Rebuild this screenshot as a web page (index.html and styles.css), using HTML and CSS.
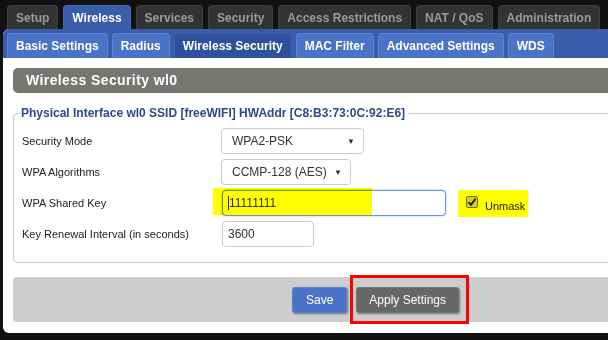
FILE: index.html
```html
<!DOCTYPE html>
<html>
<head>
<meta charset="utf-8">
<title>Wireless Security</title>
<link rel="stylesheet" href="styles.css">
</head>
<body>
<div class="page">
  <nav class="maintabs">
    <a class="tab">Setup</a>
    <a class="tab active">Wireless</a>
    <a class="tab">Services</a>
    <a class="tab">Security</a>
    <a class="tab">Access Restrictions</a>
    <a class="tab">NAT / QoS</a>
    <a class="tab">Administration</a>
  </nav>
  <div class="panel">
    <nav class="subtabs">
      <a class="subtab">Basic Settings</a>
      <a class="subtab">Radius</a>
      <a class="subtab active">Wireless Security</a>
      <a class="subtab">MAC Filter</a>
      <a class="subtab">Advanced Settings</a>
      <a class="subtab">WDS</a>
    </nav>
    <div class="content">
      <h2 class="section-title">Wireless Security wl0</h2>
      <fieldset class="iface">
        <legend>Physical Interface wl0 SSID [freeWIFI] HWAddr [C8:B3:73:0C:92:E6]</legend>
        <div class="rows">
          <div class="row">
            <label class="lbl">Security Mode</label>
            <div class="select w-mode"><span>WPA2-PSK</span><span class="arrow">&#9660;</span></div>
          </div>
          <div class="row">
            <label class="lbl">WPA Algorithms</label>
            <div class="select w-alg"><span>CCMP-128 (AES)</span><span class="arrow">&#9660;</span></div>
          </div>
          <div class="row">
            <label class="lbl">WPA Shared Key</label>
            <div class="key-wrap">
              <div class="input key focused"><span class="caret"></span>11111111</div>
              <span class="marker marker-key"></span>
            </div>
            <div class="unmask">
              <span class="checkbox"><svg width="10" height="10" viewBox="0 0 10 10"><path d="M1.5 5.2 L4 7.8 L8.6 1.6" fill="none" stroke="#222" stroke-width="2"/></svg></span>
              <span class="unmask-text">Unmask</span>
            </div>
          </div>
          <div class="row">
            <label class="lbl">Key Renewal Interval (in seconds)</label>
            <div class="input renew">3600</div>
          </div>
        </div>
      </fieldset>
      <div class="buttons">
        <button class="btn btn-save">Save</button>
        <div class="apply-wrap">
          <button class="btn btn-apply">Apply Settings</button>
          <span class="redbox"></span>
        </div>
      </div>
    </div>
  </div>
</div>
</body>
</html>
```
FILE: styles.css
```css
html, body {
  margin: 0;
  padding: 0;
  background: #111;
  overflow: hidden;
}
body {
  font-family: "Liberation Sans", Tahoma, Arial, sans-serif;
}
.page {
  width: 760px;
}
.maintabs {
  display: flex;
  gap: 5px;
  padding: 5px 0 0 7px;
  height: 24px;
}
.tab {
  display: flex;
  align-items: center;
  padding: 0 8px;
  background: #333;
  border: 1px solid #3e3e3e;
  border-bottom: none;
  border-radius: 4px 4px 0 0;
  color: #9a9a9a;
  font-weight: bold;
  font-size: 12px;
}
.tab.active {
  background: #3a5caa;
  border-color: #4768b6;
  color: #fff;
}
.panel {
  margin-left: 3px;
  width: 745px;
  background: #fff;
  border-radius: 6px 0 0 6px;
}
.subtabs {
  display: flex;
  gap: 4px;
  height: 25px;
  padding: 4px 0 0 4px;
  background: #3a5caa;
  border-radius: 6px 0 0 0;
}
.subtab {
  display: flex;
  align-items: center;
  padding: 0 8px;
  background: #4a73c8;
  border: 1px solid #5a82d2;
  border-bottom: none;
  border-radius: 4px 4px 0 0;
  color: #fff;
  font-weight: bold;
  font-size: 12px;
}
.subtab.active {
  background: #2f519d;
  border-color: #3d5fa9;
}
.content {
  padding: 10px 10px 11px 10px;
}
.section-title {
  margin: 0;
  height: 25px;
  line-height: 25px;
  padding-left: 13px;
  background: #777672;
  border-radius: 5px;
  color: #fff;
  font-size: 14px;
  font-weight: bold;
  letter-spacing: 0.4px;
}
.iface {
  margin: 13px 0 0;
  padding: 8px 8px 15px;
  border: 1px solid #ccc;
  border-radius: 4px;
}
.iface legend {
  padding: 0 3px 0 0;
  margin-left: -1px;
  color: #2e4a86;
  font-size: 12px;
  font-weight: bold;
  line-height: 14px;
}
.rows {
  display: flex;
  flex-direction: column;
  gap: 5px;
}
.row {
  display: flex;
  align-items: center;
  height: 26px;
}
.lbl {
  width: 199px;
  flex: none;
  font-size: 11px;
  color: #222;
}
.select {
  box-sizing: border-box;
  display: flex;
  align-items: center;
  justify-content: space-between;
  height: 26px;
  padding: 0 8px 0 10px;
  border: 1px solid #ccc;
  border-radius: 4px;
  background: #fff;
  font-size: 12px;
  color: #333;
}
.select .arrow {
  font-size: 8px;
  color: #333;
}
.w-mode { width: 143px; }
.w-alg { width: 130px; }
.input {
  box-sizing: border-box;
  display: flex;
  align-items: center;
  height: 26px;
  padding: 0 5px;
  border: 1px solid #ccc;
  border-radius: 4px;
  background: #fff;
  font-size: 12px;
  color: #333;
}
.key-wrap {
  position: relative;
  margin-left: 1px;
}
.key {
  width: 224px;
}
.focused {
  border-color: #6f93d0;
  box-shadow: 0 0 2px rgba(80, 120, 200, 0.6);
}
.caret {
  width: 1px;
  height: 14px;
  background: #333;
}
.marker {
  position: absolute;
  background: #ffff00;
  mix-blend-mode: multiply;
}
.marker-key {
  left: -9px;
  top: -2px;
  width: 159px;
  height: 27px;
}
.unmask {
  display: flex;
  align-items: center;
  gap: 7px;
  height: 27px;
  margin-left: 12px;
  padding: 0 3px 0 8px;
  background: #ffff00;
  font-size: 11px;
  color: #222;
}
.checkbox {
  box-sizing: border-box;
  display: flex;
  align-items: center;
  justify-content: center;
  width: 12px;
  height: 12px;
  border: 1px solid #6b6b40;
  border-radius: 2px;
  background: #d8d800;
  margin-top: -2px;
}
.unmask-text {
  margin-top: 5px;
}
.renew {
  width: 92px;
  margin-left: 1px;
}
.buttons {
  margin-top: 14px;
  height: 45px;
  display: flex;
  align-items: center;
  justify-content: center;
  gap: 9px;
  background: #cdcdcd;
  border-radius: 4px;
}
.btn {
  height: 26px;
  border-radius: 3px;
  font-family: "Liberation Sans", Tahoma, Arial, sans-serif;
  font-size: 12px;
  color: #fff;
  box-shadow: 1px 1px 2px rgba(0, 0, 0, 0.45);
}
.btn-save {
  padding: 0 13px;
  background: #4a72c8;
  border: 1px solid #5b80cf;
}
.btn-apply {
  padding: 0 12px;
  background: #676767;
  border: 1px solid #777;
}
.apply-wrap {
  position: relative;
  display: flex;
}
.redbox {
  position: absolute;
  left: -6px;
  top: -12px;
  right: -10px;
  bottom: -11px;
  border: 3px solid #f00;
}
```
